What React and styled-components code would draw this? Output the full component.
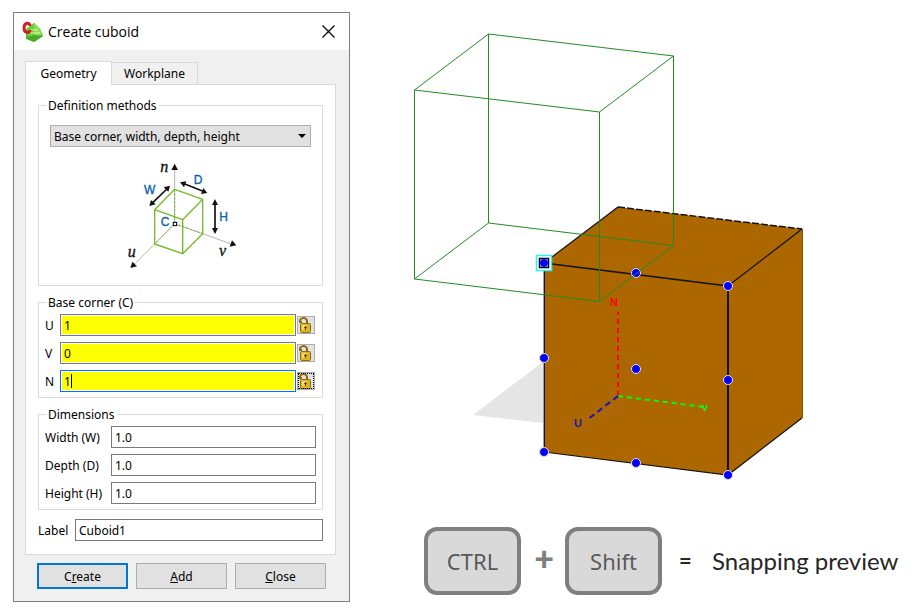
import React from "react";
import styled, { createGlobalStyle, css } from "styled-components";

const GlobalStyle = createGlobalStyle`
  * { box-sizing: border-box; }
  body { margin: 0; background: #fff; color: #000; font: 12px/17px "Noto Sans", sans-serif; }
  button, input, select { font: inherit; color: inherit; margin: 0; }
`;

const Page = styled.main`
  display: grid;
  grid-template-columns: minmax(320px, 337fr) minmax(0, 556fr);
  align-items: start;
  padding: 12px 13px;
`;

const Dialog = styled.section`
  border: 1px solid #7f7f7f;
  background: #f0f0f0;
`;

const TitleBar = styled.header`
  display: flex;
  align-items: center;
  height: 37px;
  padding: 0 8px;
  background: #fff;
`;

const Title = styled.h1`
  flex: 1;
  margin: 0 0 0 4px;
  font: 400 14px/20px "Open Sans", sans-serif;
`;

const CloseButton = styled.button`
  display: grid;
  place-items: center;
  width: 26px;
  height: 26px;
  padding: 0;
  border: 0;
  background: none;
`;

const DialogBody = styled.form`
  padding: 11px 13px 12px 11px;
`;

const Tabs = styled.div`
  display: flex;
  align-items: flex-end;
`;

const Tab = styled.button`
  position: relative;
  height: 22px;
  width: 86px;
  padding: 0;
  border: 1px solid #d9d9d9;
  border-width: 1px 1px 0 0;
  background: #f0f0f0;
  ${(p) => p.$active && css`
    height: 24px;
    width: 87px;
    border-left-width: 1px;
    margin-bottom: -1px;
    padding-bottom: 1px;
    background: #fff;
  `}
`;

const Panel = styled.div`
  display: flex;
  flex-direction: column;
  gap: 8px;
  padding: 12px;
  border: 1px solid #d9d9d9;
  background: #fff;
`;

const Group = styled.fieldset`
  min-width: 0;
  margin: 0;
  padding: ${(p) => (p.$wide ? "11px 11px 5px" : "3px 6px 5px 6px")};
  border: 1px solid #dcdcdc;
`;

const Legend = styled.legend`
  height: 17px;
  margin-left: ${(p) => (p.$wide ? "-4px" : "1px")};
  padding: 0 2px;
`;

const SelectWrap = styled.div`
  display: grid;
  align-items: center;
  > * { grid-area: 1 / 1; }
  > svg { justify-self: end; margin-right: 5px; pointer-events: none; }
`;

const Select = styled.select`
  appearance: none;
  width: 100%;
  height: 22px;
  padding: 0 20px 0 3px;
  border: 1px solid #adadad;
  border-radius: 0;
  background: #e1e1e1;
`;

const MethodDrawing = styled.svg`
  display: block;
  width: 142px;
  height: 130px;
  margin: 3px auto 0;
`;

const Rows = styled.div`
  display: grid;
  gap: 6px;
`;

const CornerRow = styled.div`
  display: grid;
  grid-template-columns: 14px 1fr 18px;
  column-gap: 1px;
  align-items: center;
  padding-right: 1px;
`;

const DimensionRow = styled.div`
  display: grid;
  grid-template-columns: 66px 1fr;
  align-items: center;
`;

const LabelRow = styled.div`
  display: grid;
  grid-template-columns: 37px 1fr;
  align-items: center;
  padding: 1px 0;
`;

const InputWrap = styled.div`
  position: relative;
  display: grid;
`;

const Input = styled.input`
  width: 100%;
  min-width: 0;
  height: 22px;
  padding: 0 3px;
  border: 1px solid ${(p) => (p.$active ? "#0078d7" : "#7a7a7a")};
  border-radius: 0;
  outline: 0;
  background: ${(p) => (p.$filled ? "#ff0" : "#fff")};
  box-shadow: inset 0 0 0 1px #fff;
`;

const Caret = styled.span`
  position: absolute;
  left: 11px;
  top: 4px;
  width: 1px;
  height: 14px;
  background: #000;
`;

const LockButton = styled.button`
  display: grid;
  width: 18px;
  height: 18px;
  padding: 0;
  border: 1px solid #adadad;
  background: #e1e1e1;
  outline: ${(p) => (p.$active ? "1px dotted #000" : "0")};
  outline-offset: -2px;
`;

const Actions = styled.div`
  display: grid;
  grid-template-columns: repeat(3, 1fr);
  gap: 8px;
  padding: 8px 10px 0 12px;
`;

const ActionButton = styled.button`
  height: 26px;
  padding: 0;
  border: ${(p) => (p.$primary ? "2px solid #0078d7" : "1px solid #adadad")};
  background: #e1e1e1;
`;

const Preview = styled.section`
  display: flex;
  flex-direction: column;
`;

const Scene = styled.svg`
  display: block;
  width: 100%;
  height: auto;
`;

const Shortcut = styled.div`
  display: flex;
  align-items: center;
  padding: 15px 0 0 74px;
  white-space: nowrap;
  font: 24px/30px Lato, sans-serif;
  color: #262626;
`;

const Key = styled.kbd`
  display: grid;
  place-items: center;
  width: 97px;
  height: 68px;
  border: 4px solid #7f7f7f;
  border-radius: 13px;
  background: #d9d9d9;
  color: #595959;
  font: 22px/30px "Noto Sans", sans-serif;
`;

const Plus = styled.span`
  width: 44px;
  padding: 0 0 6px 2px;
  text-align: center;
  color: #7f7f7f;
  font-size: 34px;
  font-weight: 900;
`;

const Equals = styled.span`
  width: 50px;
  padding-left: 17px;
  font-size: 22px;
  font-weight: 700;
`;

function AppIcon() {
  return (
    <svg width="22" height="22" viewBox="0 0 22 22" aria-hidden="true">
      <path d="M12 2 18 8 21 15 12 21 4 18 4 8Z" fill="#57b82c" />
      <path d="M12 2 18 8 20 14 12 17 5 14 5 8Z" fill="#86df50" />
      <path d="M12 2 12 15 5 14 6 7Z" fill="#6ccc3a" />
      <path d="M4 17 12 14 21 15 12 21Z" fill="#48aa28" />
      <path d="M9 9H16M8 12H18" stroke="#d5f8ae" fill="none" />
      <path d="M8 5C8 1 2 1 2 7S8 12 8 9" fill="none" stroke="#cf1e20" strokeWidth="3" />
    </svg>
  );
}

function LockIcon() {
  return (
    <svg width="16" height="16" viewBox="0 0 16 16" aria-hidden="true">
      <path d="M4 5H2C1 0 9 0 9 4V7" fill="none" stroke="#8a6a10" strokeWidth="2" />
      <rect x="2.5" y="6.5" width="10" height="9" rx="1" fill="#dcb62a" stroke="#8f6b0c" />
      <path d="M4 8H9L5 13H4Z" fill="#f5dc6c" />
      <path d="M7.5 9V13M6 10.5H9" stroke="#6b4d08" />
    </svg>
  );
}

function DefinitionDrawing() {
  return (
    <MethodDrawing viewBox="0 0 426 390" role="img" aria-label="Cuboid definition">
      <g fill="none" stroke="#b5b5b5" strokeWidth="3">
        <path d="M194 115V55M134 282 70 346M278 251 364 282M194 221V120M194 221 134 282M194 221 278 251" />
      </g>
      <path d="M194 221V120M194 221 134 282M194 221 278 251" fill="none" stroke="#76b82a" strokeWidth="3" strokeDasharray="7 5" />
      <path d="M134 179 194 118 278 148 218 209ZM134 179V282L218 311 278 251V148M218 209V311" fill="none" stroke="#76b82a" strokeWidth="4" strokeLinejoin="round" />
      <g stroke="#111" strokeWidth="5"><path d="M125 161 174 114M219 100 283 125M315 156V244" /></g>
      <g fill="#111">
        <path d="M194 41 204 60H184ZM61 354 67 335 81 349ZM379 286 359 290 366 271Z" />
        <path d="M180 107 175 125 161 112ZM118 168 123 150 137 163Z" />
        <path d="M210 97 229 94 222 112ZM292 129 273 132 280 114Z" />
        <path d="M315 147 324 165H306ZM315 252 324 234H306Z" />
      </g>
      <rect x="190" y="217" width="10" height="10" fill="#fff" stroke="#000" strokeWidth="3" />
      <g fill="#0861ae" stroke="#0861ae" fontFamily="Liberation Sans, sans-serif" fontSize="36">
        <text x="102" y="131">W</text><text x="251" y="101">D</text>
        <text x="328" y="213">H</text><text x="152" y="229">C</text>
      </g>
      <g fill="#111" stroke="#111" fontFamily="Liberation Serif, serif" fontStyle="italic" fontSize="48">
        <text x="151" y="67">n</text><text x="53" y="320">u</text><text x="327" y="317">v</text>
      </g>
    </MethodDrawing>
  );
}

const SNAP_POINTS = [
  [636, 273], [728, 286], [544, 358], [636, 369], [728, 380], [544, 452], [636, 463], [728, 475],
];

function CuboidScene() {
  return (
    <Scene viewBox="350 12 556 500" role="img" aria-label="Cuboid snapping preview">
      <path d="M473 415 544 361V423Z" fill="#e5e5e5" />
      <path d="M544 263 618 207 802 229V418L728 475 544 452Z" fill="#ad6700" />
      <g fill="none" stroke="#111">
        <path d="M544 263 618 207M728 286 802 229M802 418 728 475 544 452" strokeWidth="1.2" />
        <path d="M618 207 802 229" strokeWidth="1.5" strokeDasharray="7 2" />
        <path d="M802.5 229V418" stroke="#8a5200" />
        <path d="M544 263 728 286" strokeWidth="1.5" />
        <path d="M543.5 263V452" stroke="#a0a0a0" />
        <path d="M544.5 263V452" />
        <path d="M728 286V475" strokeWidth="2" />
      </g>
      <g fill="none" strokeWidth="2">
        <path d="M618 396V312" stroke="#f00" strokeDasharray="5 4" />
        <path d="M618 396 704 407" stroke="#0f0" strokeDasharray="5 4" />
        <path d="M618 396 587 420" stroke="#1414c8" strokeDasharray="6 4" />
      </g>
      <g fontFamily="Liberation Sans, sans-serif" fontSize="11" fontWeight="700" textAnchor="middle">
        <text x="614" y="306" fill="#f00">N</text>
        <text x="578" y="427" fill="#1e1ea0">U</text>
        <text x="705" y="411" fill="#0f0" fontSize="9">V</text>
      </g>
      <g fill="#00f" stroke="#e8e0e0">
        {SNAP_POINTS.map(([x, y]) => <circle key={`${x}-${y}`} cx={x} cy={y} r="4.5" />)}
      </g>
      <rect x="536.5" y="255.5" width="15" height="15" fill="#fff" stroke="#2ef0f5" strokeWidth="1.5" />
      <rect x="539.5" y="258.5" width="9" height="9" fill="#fff" stroke="#000" strokeWidth="1.5" />
      <circle cx="544" cy="263" r="4" fill="#00f" />
      <path d="M414.5 90 488.5 34 673.5 56 599.5 112ZM414.5 279 488.5 223 673.5 245.5 599.5 301.5ZM414.5 90V279M488.5 34V223M673.5 56V245.5M599.5 112V301.5" fill="none" stroke="#228b22" />
    </Scene>
  );
}

const CORNER = [["U", "1"], ["V", "0"], ["N", "1"]];
const DIMENSIONS = [["Width (W)", "width"], ["Depth (D)", "depth"], ["Height (H)", "height"]];

export default function App() {
  return (
    <>
      <GlobalStyle />
      <Page>
        <Dialog role="dialog" aria-labelledby="dialog-title">
          <TitleBar>
            <AppIcon />
            <Title id="dialog-title">Create cuboid</Title>
            <CloseButton type="button" aria-label="Close dialog">
              <svg width="13" height="13" viewBox="0 0 13 13"><path d="M.5.5 12.5 12.5M12.5.5.5 12.5" stroke="#000" strokeWidth="1.2" /></svg>
            </CloseButton>
          </TitleBar>
          <DialogBody onSubmit={(e) => e.preventDefault()}>
            <Tabs role="tablist">
              <Tab type="button" role="tab" aria-selected="true" $active>Geometry</Tab>
              <Tab type="button" role="tab" aria-selected="false">Workplane</Tab>
            </Tabs>
            <Panel role="tabpanel">
              <Group $wide>
                <Legend $wide>Definition methods</Legend>
                <SelectWrap>
                  <Select aria-label="Definition methods">
                    <option>Base corner, width, depth, height</option>
                  </Select>
                  <svg width="8" height="4" viewBox="0 0 8 4" aria-hidden="true"><path d="M0 0H8L4 4Z" /></svg>
                </SelectWrap>
                <DefinitionDrawing />
              </Group>
              <Group>
                <Legend>Base corner (C)</Legend>
                <Rows>
                  {CORNER.map(([axis, value]) => (
                    <CornerRow key={axis}>
                      <label htmlFor={`corner-${axis}`}>{axis}</label>
                      <InputWrap>
                        <Input id={`corner-${axis}`} defaultValue={value} $filled $active={axis === "N"} />
                        {axis === "N" && <Caret />}
                      </InputWrap>
                      <LockButton type="button" aria-label={`Lock ${axis}`} $active={axis === "N"}><LockIcon /></LockButton>
                    </CornerRow>
                  ))}
                </Rows>
              </Group>
              <Group>
                <Legend>Dimensions</Legend>
                <Rows>
                  {DIMENSIONS.map(([label, id]) => (
                    <DimensionRow key={id}>
                      <label htmlFor={id}>{label}</label>
                      <Input id={id} defaultValue="1.0" />
                    </DimensionRow>
                  ))}
                </Rows>
              </Group>
              <LabelRow>
                <label htmlFor="label">Label</label>
                <Input id="label" defaultValue="Cuboid1" />
              </LabelRow>
            </Panel>
            <Actions>
              <ActionButton type="submit" $primary>C<u>r</u>eate</ActionButton>
              <ActionButton type="button"><u>A</u>dd</ActionButton>
              <ActionButton type="button"><u>C</u>lose</ActionButton>
            </Actions>
          </DialogBody>
        </Dialog>
        <Preview>
          <CuboidScene />
          <Shortcut>
            <Key>CTRL</Key>
            <Plus>+</Plus>
            <Key>Shift</Key>
            <Equals>=</Equals>
            <span>Snapping preview</span>
          </Shortcut>
        </Preview>
      </Page>
    </>
  );
}
